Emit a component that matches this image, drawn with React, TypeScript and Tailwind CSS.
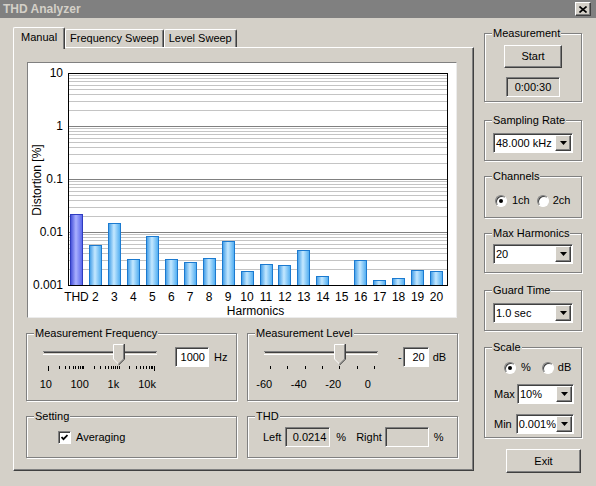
import type { ReactNode } from "react";

const raised =
  "border border-t-white border-l-white border-r-[#404040] border-b-[#404040] bg-[#d4d0c8] shadow-[inset_-1px_-1px_0_#808080]";
const sunken =
  "border border-t-[#808080] border-l-[#808080] border-r-white border-b-white shadow-[inset_1px_1px_0_#404040]";

const BARS = [
  0.0214, 0.0057, 0.0148, 0.0031, 0.0084, 0.0031, 0.0027, 0.0032, 0.0068, 0.0018, 0.0025, 0.0024,
  0.0046, 0.0015, 0, 0.003, 0.00124, 0.00135, 0.0019, 0.0018,
];
const LABELS = ["THD", "2", "3", "4", "5", "6", "7", "8", "9", "10", "11", "12", "13", "14", "15", "16", "17", "18", "19", "20"];

// plot area inside the white chart box
const L = 40;
const T = 10;
const W = 379;
const H = 212;
const DEC = 53;
const yOf = (v: number) => T + H - (Math.log10(v) + 3) * DEC;
const px = (n: number) => Math.round(n) + 0.5;

function Chart() {
  const slot = W / 20;
  const minor: number[] = [];
  for (let d = 0; d < 4; d++) {
    for (let k = 2; k <= 9; k++) minor.push(yOf(10 ** (d - 3) * k));
  }
  const major = [0.01, 0.1, 1].map(yOf);
  const yTicks: [string, number][] = [
    ["10", 10],
    ["1", 1],
    ["0.1", 0.1],
    ["0.01", 0.01],
    ["0.001", 0.001],
  ];

  return (
    <svg width={428} height={254} className="block" fontFamily="'Liberation Sans', Arial, sans-serif" fontSize={12}>
      <defs>
        <linearGradient id="gBar" x1="0" x2="1" y1="0" y2="0">
          <stop offset="0" stopColor="#3c9ae6" />
          <stop offset="0.45" stopColor="#c4e8ff" />
          <stop offset="1" stopColor="#4aaaf0" />
        </linearGradient>
        <linearGradient id="gThd" x1="0" x2="1" y1="0" y2="0">
          <stop offset="0" stopColor="#3f4bd8" />
          <stop offset="0.45" stopColor="#a9b0ff" />
          <stop offset="1" stopColor="#5563ea" />
        </linearGradient>
      </defs>
      {minor.map((y, i) => (
        <line key={i} x1={L} x2={L + W} y1={px(y)} y2={px(y)} stroke="#c4c4c4" />
      ))}
      {major.map((y, i) => (
        <line key={i} x1={L} x2={L + W} y1={px(y)} y2={px(y)} stroke="#808080" />
      ))}
      {BARS.map((v, i) => {
        if (!v) return null;
        const x = Math.round(L + i * slot + 2);
        const y = Math.round(yOf(v));
        return (
          <rect
            key={i}
            x={x + 0.5}
            y={y + 0.5}
            width={12}
            height={T + H - y}
            fill={i === 0 ? "url(#gThd)" : "url(#gBar)"}
            stroke={i === 0 ? "#2f3cc0" : "#1b7ad0"}
          />
        );
      })}
      <rect x={L + 0.5} y={T + 0.5} width={W} height={H} fill="none" stroke="#000" />
      {yTicks.map(([t, v]) => (
        <text key={t} x={35} y={Math.round(yOf(v)) + 4} textAnchor="end" fill="#000">
          {t}
        </text>
      ))}
      {LABELS.map((t, i) => (
        <text key={t} x={L + i * slot + slot / 2 - 1} y={238} textAnchor="middle" fill="#000">
          {t}
        </text>
      ))}
      <text x={L + W / 2 - 2} y={252} textAnchor="middle" fill="#000">
        Harmonics
      </text>
      <text transform="translate(13 117) rotate(-90)" textAnchor="middle" fill="#000">
        Distortion [%]
      </text>
    </svg>
  );
}

function Group({ title, className, children }: { title: string; className?: string; children?: ReactNode }) {
  return (
    <div className={`relative border border-[#808080] shadow-[inset_1px_1px_0_#fff,1px_1px_0_#fff] ${className ?? ""}`}>
      <span className="absolute -top-[8px] left-[7px] bg-[#d4d0c8] px-[1px] leading-[14px]">{title}</span>
      {children}
    </div>
  );
}

function Combo({ value, className }: { value: string; className?: string }) {
  return (
    <div className={`flex h-[20px] items-center bg-white ${sunken} ${className ?? ""}`}>
      <span className="flex-1 truncate pl-[2px]">{value}</span>
      <span className={`mr-[1px] flex h-[16px] w-[16px] items-center justify-center ${raised}`}>
        <svg width="7" height="4">
          <path d="M0 0h7L3.5 4z" fill="#000" />
        </svg>
      </span>
    </div>
  );
}

function Radio({ checked }: { checked?: boolean }) {
  return (
    <span className="flex h-[12px] w-[12px] items-center justify-center rounded-full border border-t-[#808080] border-l-[#808080] border-r-white border-b-white bg-white shadow-[inset_1px_1px_0_#404040]">
      {checked ? <span className="h-[4px] w-[4px] rounded-full bg-black" /> : null}
    </span>
  );
}

function Slider({ ticks, tall }: { ticks: number[]; tall?: boolean }) {
  return (
    <svg width={124} height={28} className="block">
      <line x1={3} x2={117} y1={8.5} y2={8.5} stroke="#808080" />
      <line x1={4} x2={116} y1={9.5} y2={9.5} stroke="#404040" />
      <line x1={4} x2={116} y1={10.5} y2={10.5} stroke="#d4d0c8" />
      <line x1={3} x2={117} y1={11.5} y2={11.5} stroke="#fff" />
      <path d="M73 1h11v15l-5.5 5.5L73 16z" fill="#d4d0c8" />
      <polyline points="73.5,16 73.5,1.5 83.5,1.5" fill="none" stroke="#fff" />
      <polyline points="73.5,16 78.5,21" fill="none" stroke="#fff" />
      <polyline points="83.5,1.5 83.5,16 78.5,21" fill="none" stroke="#808080" />
      <polyline points="84.5,1 84.5,16.2 78.5,22.2" fill="none" stroke="#404040" />
      {ticks.map((x, i) => {
        const long = tall && (i === 0 || i === ticks.length - 1);
        return <line key={i} x1={px(x)} x2={px(x)} y1={23} y2={long ? 28 : 26} stroke="#000" />;
      })}
    </svg>
  );
}

const freqTicks: number[] = [];
for (let d = 0; d < 3; d++) {
  for (let k = 1; k <= 9; k++) freqTicks.push(8 + (d + Math.log10(k)) * 35.33);
}
freqTicks.push(8 + 3 * 35.33);
const levelTicks = [0, 1, 2, 3, 4, 5, 6].map((i) => 9 + i * 17.33);

function TabButton({ label, active }: { label: string; active?: boolean }) {
  return active ? (
    <div className="relative z-10 -mb-[2px] h-[22px] rounded-t-[2px] border border-b-0 border-t-white border-l-white border-r-[#404040] bg-[#d4d0c8] px-[7px] pt-[3px] shadow-[inset_-1px_0_0_#808080]">
      {label}
    </div>
  ) : (
    <div className="h-[18px] rounded-t-[2px] border border-b-0 border-t-white border-l-white border-r-[#404040] px-[4px] pt-[2px] shadow-[inset_-1px_0_0_#808080]">
      {label}
    </div>
  );
}

export default function App() {
  return (
    <div className="flex h-[486px] w-[596px] flex-col overflow-hidden bg-[#d4d0c8] font-['Liberation_Sans',Arial,sans-serif] text-[11px] leading-[13px] text-black">
      <div className="flex h-[18px] items-center bg-[#808080] pl-[3px] pr-[5px]">
        <span className="text-[12px] font-bold text-[#d4d0c8]">THD Analyzer</span>
        <span className={`ml-auto flex h-[14px] w-[16px] items-center justify-center ${raised}`}>
          <svg width="8" height="7">
            <path d="M0.5 0.5l7 6M7.5 0.5l-7 6" stroke="#000" strokeWidth="1.6" />
          </svg>
        </span>
      </div>

      <div className="flex pl-[13px]">
        <div className="w-[461px] pt-[9px]">
          <div className="flex h-[20px] items-end">
            <TabButton label="Manual" active />
            <TabButton label="Frequency Sweep" />
            <TabButton label="Level Sweep" />
          </div>
          <div className="h-[424px] border border-t-white border-l-white border-r-[#404040] border-b-[#404040] pl-[12px] pt-[14px] shadow-[inset_-1px_-1px_0_#808080]">
            <div className="ml-[1px] h-[256px] w-[430px] border border-t-[#808080] border-l-[#808080] border-r-[#ececec] border-b-[#ececec] bg-white">
              <Chart />
            </div>

            <div className="mt-[15px] flex gap-[10px]">
              <Group title="Measurement Frequency" className="h-[68px] w-[211px]">
                <div className="flex pl-[13px] pt-[9px]">
                  <div className="w-[124px]">
                    <Slider ticks={freqTicks} tall />
                    <div className="-ml-[11px] mt-[7px] flex">
                      {["10", "100", "1k", "10k"].map((t) => (
                        <span key={t} className="w-[36px] text-center">
                          {t}
                        </span>
                      ))}
                    </div>
                  </div>
                  <div className="mt-[4px] flex h-[20px] items-center">
                    <span className={`ml-[11px] flex h-[20px] w-[34px] items-center justify-end bg-white pr-[3px] ${sunken}`}>1000</span>
                    <span className="ml-[5px]">Hz</span>
                  </div>
                </div>
              </Group>
              <Group title="Measurement Level" className="h-[68px] w-[211px]">
                <div className="flex pl-[13px] pt-[9px]">
                  <div className="w-[124px]">
                    <Slider ticks={levelTicks} />
                    <div className="-ml-[14px] mt-[7px] flex">
                      {["-60", "-40", "-20", "0"].map((t) => (
                        <span key={t} className="w-[36px] text-center">
                          {t}
                        </span>
                      ))}
                    </div>
                  </div>
                  <div className="mt-[4px] flex h-[20px] items-center">
                    <span className="ml-[13px]">-</span>
                    <span className={`ml-[1px] flex h-[20px] w-[26px] items-center justify-end bg-white pr-[3px] ${sunken}`}>20</span>
                    <span className="ml-[4px]">dB</span>
                  </div>
                </div>
              </Group>
            </div>

            <div className="mt-[15px] flex gap-[10px]">
              <Group title="Setting" className="h-[42px] w-[211px]">
                <div className="flex items-center pl-[31px] pt-[14px]">
                  <span className={`flex h-[13px] w-[13px] items-center justify-center bg-white ${sunken}`}>
                    <svg width="7" height="7">
                      <path d="M0.5 3l2 2.2 4-4.2" fill="none" stroke="#000" strokeWidth="1.8" />
                    </svg>
                  </span>
                  <span className="ml-[5px]">Averaging</span>
                </div>
              </Group>
              <Group title="THD" className="h-[42px] w-[211px]">
                <div className="flex items-center pl-[15px] pt-[10px]">
                  <span>Left</span>
                  <span className={`ml-[4px] flex h-[20px] w-[45px] items-center justify-end pr-[3px] ${sunken}`}>0.0214</span>
                  <span className="ml-[6px]">%</span>
                  <span className="ml-[10px]">Right</span>
                  <span className={`ml-[3px] h-[20px] w-[44px] ${sunken}`} />
                  <span className="ml-[5px]">%</span>
                </div>
              </Group>
            </div>
          </div>
        </div>

        <div className="ml-[10px] flex w-[98px] flex-col pt-[15px]">
          <Group title="Measurement" className="h-[69px]">
            <div className="flex flex-col items-center pt-[11px]">
              <span className={`flex h-[23px] w-[58px] items-center justify-center ${raised}`}>Start</span>
              <span className={`mt-[9px] flex h-[20px] w-[54px] items-center justify-center ${sunken}`}>0:00:30</span>
            </div>
          </Group>
          <Group title="Sampling Rate" className="mt-[18px] h-[41px]">
            <div className="px-[8px] pt-[12px]">
              <Combo value="48.000 kHz" />
            </div>
          </Group>
          <Group title="Channels" className="mt-[15px] h-[42px]">
            <div className="flex items-center pl-[10px] pt-[17px]">
              <Radio checked />
              <span className="ml-[5px]">1ch</span>
              <span className="ml-[7px]">
                <Radio />
              </span>
              <span className="ml-[4px]">2ch</span>
            </div>
          </Group>
          <Group title="Max Harmonics" className="mt-[15px] h-[40px]">
            <div className="px-[8px] pt-[10px]">
              <Combo value="20" />
            </div>
          </Group>
          <Group title="Guard Time" className="mt-[17px] h-[41px]">
            <div className="px-[8px] pt-[12px]">
              <Combo value="1.0 sec" />
            </div>
          </Group>
          <Group title="Scale" className="mt-[16px] h-[91px]">
            <div className="flex items-center pl-[19px] pt-[13px]">
              <Radio checked />
              <span className="ml-[5px]">%</span>
              <span className="ml-[11px]">
                <Radio />
              </span>
              <span className="ml-[4px]">dB</span>
            </div>
            <div className="mt-[10px] flex items-center pl-[9px] pr-[7px]">
              <span className="w-[23px]">Max</span>
              <Combo value="10%" className="flex-1" />
            </div>
            <div className="mt-[10px] flex items-center pl-[9px] pr-[7px]">
              <span className="w-[23px]">Min</span>
              <Combo value="0.001%" className="flex-1" />
            </div>
          </Group>
          <span className={`ml-[22px] mt-[11px] flex h-[24px] w-[75px] items-center justify-center ${raised}`}>Exit</span>
        </div>
      </div>
    </div>
  );
}
